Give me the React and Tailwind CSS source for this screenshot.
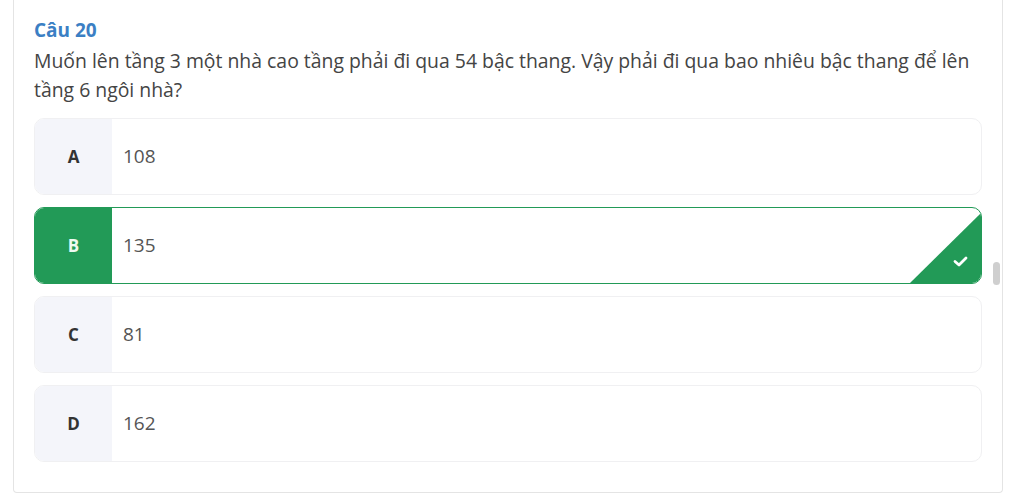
import React from "react";

const options = [
  { k: "A", v: "108" },
  { k: "B", v: "135", correct: true },
  { k: "C", v: "81" },
  { k: "D", v: "162" },
];

export default function App() {
  return (
    <div className="relative w-[1024px] h-[502px] bg-white overflow-hidden" style={{ fontFamily: '"Open Sans", "Noto Sans", sans-serif' }}>
      <div className="ml-[13px] w-[990px] -mt-[10px] border-x border-b border-[#e4e4e4] rounded-b-[4px] pt-[27px] pl-[20px] pr-[20px] pb-[30px]">
        <div className="text-[19px] font-bold text-[#3b7fc4] leading-[26px]">Câu 20</div>
        <div className="text-[19.4px] text-[#444] leading-[29px] mt-[3px]">
          Muốn lên tầng 3 một nhà cao tầng phải đi qua 54 bậc thang. Vậy phải đi qua bao nhiêu bậc thang để lên tầng 6 ngôi nhà?
        </div>
        <div className="mt-[14px] flex flex-col gap-[12px]">
          {options.map((o) =>
            o.correct ? (
              <div key={o.k} className="relative flex h-[77px] rounded-[10px] border border-[#229a57] overflow-hidden bg-white">
                <div className="w-[77px] bg-[#229a57] flex items-center justify-center text-[#eefaf2] font-bold text-[17px]">{o.k}</div>
                <div className="flex items-center pl-[11px] text-[19px] text-[#555]">{o.v}</div>
                <svg className="absolute right-0 bottom-0" width="71" height="70" viewBox="0 0 71 70">
                  <polygon points="0,70 71,0 71,70" fill="#229a57" />
                  <path d="M45 48.5 L49 52 L56 45" fill="none" stroke="white" strokeWidth="2.8" strokeLinecap="round" strokeLinejoin="round" />
                </svg>
              </div>
            ) : (
              <div key={o.k} className="flex h-[77px] rounded-[10px] border border-[#f0f0f2] overflow-hidden bg-white">
                <div className="w-[77px] bg-[#f4f5fa] flex items-center justify-center text-[#333] font-bold text-[17px]">{o.k}</div>
                <div className="flex items-center pl-[11px] text-[19px] text-[#555]">{o.v}</div>
              </div>
            )
          )}
        </div>
      </div>
      <div className="absolute left-[993px] top-[262px] w-[7px] h-[23px] rounded-full bg-[#cfcfcf]" />
    </div>
  );
}
